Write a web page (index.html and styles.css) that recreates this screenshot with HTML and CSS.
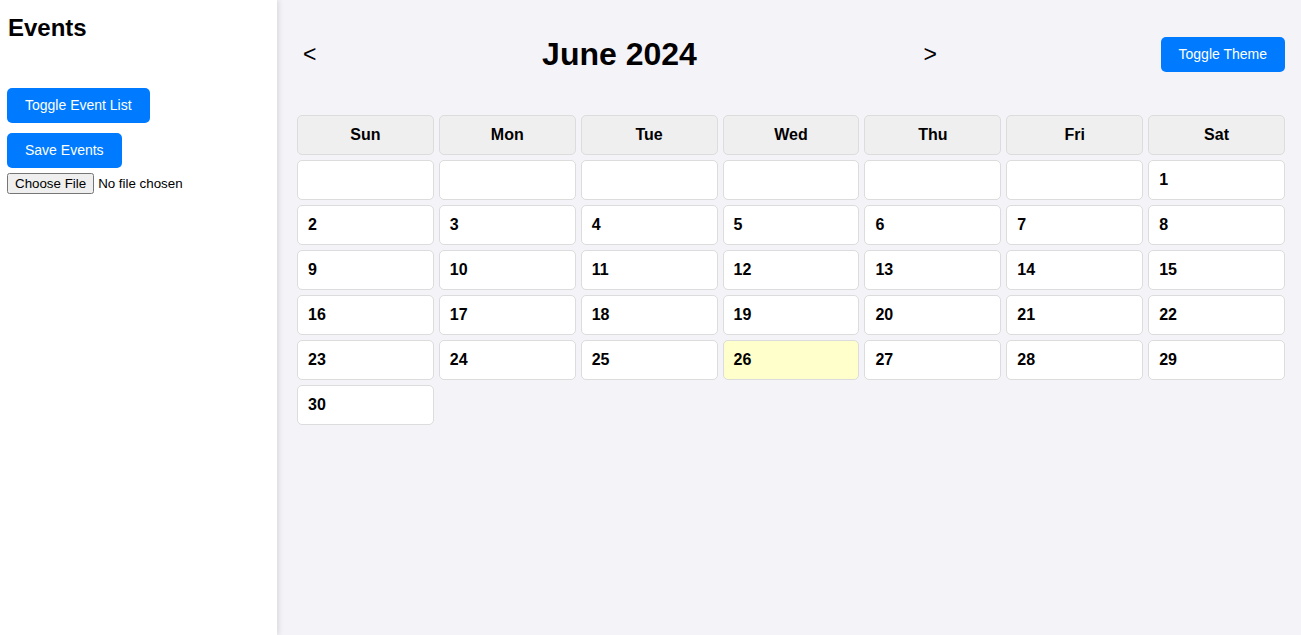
FILE: index.html
```html
<!DOCTYPE html>
<html lang="en">
<head>
<meta charset="utf-8">
<title>Calendar</title>
<link rel="stylesheet" href="styles.css">
</head>
<body>
<div class="app">
  <aside class="sidebar">
    <h2 class="sidebar-title">Events</h2>
    <div class="event-list"></div>
    <button class="btn">Toggle Event List</button>
    <button class="btn">Save Events</button>
    <input type="file" class="file-input">
  </aside>
  <main class="main">
    <header class="cal-header">
      <div class="nav">
        <button class="nav-btn">&lt;</button>
        <h1 class="month-title">June 2024</h1>
        <button class="nav-btn">&gt;</button>
      </div>
      <button class="btn theme-btn">Toggle Theme</button>
    </header>
    <div class="calendar">
      <div class="day-name">Sun</div>
      <div class="day-name">Mon</div>
      <div class="day-name">Tue</div>
      <div class="day-name">Wed</div>
      <div class="day-name">Thu</div>
      <div class="day-name">Fri</div>
      <div class="day-name">Sat</div>
      <div class="day"></div>
      <div class="day"></div>
      <div class="day"></div>
      <div class="day"></div>
      <div class="day"></div>
      <div class="day"></div>
      <div class="day">1</div>
      <div class="day">2</div>
      <div class="day">3</div>
      <div class="day">4</div>
      <div class="day">5</div>
      <div class="day">6</div>
      <div class="day">7</div>
      <div class="day">8</div>
      <div class="day">9</div>
      <div class="day">10</div>
      <div class="day">11</div>
      <div class="day">12</div>
      <div class="day">13</div>
      <div class="day">14</div>
      <div class="day">15</div>
      <div class="day">16</div>
      <div class="day">17</div>
      <div class="day">18</div>
      <div class="day">19</div>
      <div class="day">20</div>
      <div class="day">21</div>
      <div class="day">22</div>
      <div class="day">23</div>
      <div class="day">24</div>
      <div class="day">25</div>
      <div class="day today">26</div>
      <div class="day">27</div>
      <div class="day">28</div>
      <div class="day">29</div>
      <div class="day">30</div>
    </div>
  </main>
</div>
</body>
</html>
```
FILE: styles.css
```css
html, body {
  margin: 0;
  padding: 0;
  height: 100%;
}
body {
  font-family: "Liberation Sans", Arial, sans-serif;
  color: #000;
  background: #f4f3f8;
}
.app {
  display: flex;
  height: 100%;
}
.sidebar {
  width: 263px;
  flex-shrink: 0;
  background: #fff;
  padding: 0 7px;
  box-shadow: 2px 0 5px rgba(0, 0, 0, 0.1);
  display: flex;
  flex-direction: column;
  align-items: flex-start;
  position: relative;
  z-index: 1;
}
.sidebar-title {
  font-size: 24px;
  font-weight: bold;
  margin: 14px 1px 0;
  line-height: 28px;
}
.event-list {
  height: 46px;
}
.btn {
  background: #007bff;
  color: #fff;
  border: none;
  border-radius: 5px;
  font-family: "Liberation Sans", Arial, sans-serif;
  font-size: 14px;
  padding: 9px 18px;
  line-height: 17px;
  cursor: pointer;
  margin-bottom: 10px;
}
.sidebar .btn + .btn {
  margin-bottom: 5px;
}
.file-input {
  font-family: "Liberation Sans", Arial, sans-serif;
  font-size: 13.33px;
}
.main {
  flex: 1;
  padding: 20px 16px 20px 20px;
}
.cal-header {
  display: flex;
  align-items: center;
  justify-content: space-between;
  padding: 16px 0;
}
.nav {
  width: 645px;
  display: flex;
  align-items: center;
  justify-content: space-between;
}
.nav-btn {
  background: transparent;
  border: none;
  font-family: "Liberation Sans", Arial, sans-serif;
  font-size: 23px;
  padding: 4px 5px 4px 6px;
  color: #000;
  cursor: pointer;
}
.month-title {
  margin: 0;
  font-size: 32px;
  line-height: 37px;
  font-weight: bold;
}
.theme-btn {
  margin-bottom: 0;
}
.calendar {
  margin-top: 26px;
  display: grid;
  grid-template-columns: repeat(7, 1fr);
  gap: 5px;
}
.day-name, .day {
  height: 40px;
  box-sizing: border-box;
  border: 1px solid #dcdcdc;
  border-radius: 5px;
  font-size: 16px;
  font-weight: bold;
  line-height: 18px;
  padding: 10px;
}
.day-name {
  background: #efefef;
  text-align: center;
}
.day {
  background: #fff;
}
.day.today {
  background: #ffffcc;
}
```
